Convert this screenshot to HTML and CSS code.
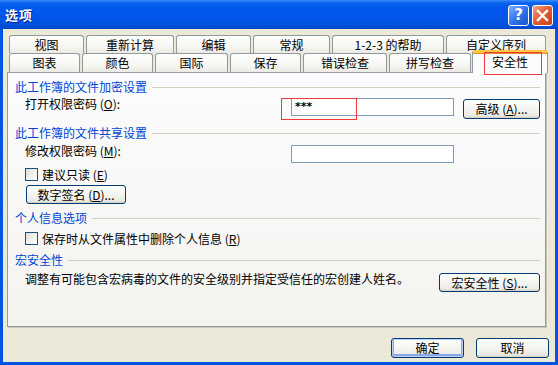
FILE: index.html
```html
<!DOCTYPE html>
<html lang="zh-CN">
<head>
    <meta charset="UTF-8">
    <title>选项</title>
    <link rel="stylesheet" href="styles.css">
</head>
<body>
    <div class="window">
        <!-- Title bar -->
        <div class="titlebar">
            <span class="title">选项</span>
            <div class="caption-buttons">
                <span class="cap help">?</span>
                <span class="cap close">
                    <svg width="13" height="13" viewBox="0 0 13 13">
                        <path d="M2 2 L11 11 M11 2 L2 11" stroke="#fff" stroke-width="2.4" stroke-linecap="square"/>
                    </svg>
                </span>
            </div>
        </div>

        <div class="client">
            <!-- Tabs -->
            <div class="tabs">
                <div class="tab-row row-back">
                    <div class="tab">视图</div>
                    <div class="tab">重新计算</div>
                    <div class="tab">编辑</div>
                    <div class="tab">常规</div>
                    <div class="tab">1-2-3 的帮助</div>
                    <div class="tab">自定义序列</div>
                </div>
                <div class="tab-row row-front">
                    <div class="tab">图表</div>
                    <div class="tab">颜色</div>
                    <div class="tab">国际</div>
                    <div class="tab">保存</div>
                    <div class="tab">错误检查</div>
                    <div class="tab">拼写检查</div>
                    <div class="tab active">安全性</div>
                </div>
            </div>

            <!-- Security page -->
            <div class="page">
                <div class="group-title">此工作簿的文件加密设置</div>
                <div class="field field-open">
                    <span class="label">打开权限密码 (<u>O</u>):</span>
                    <span class="textbox">***</span>
                    <span class="btn btn-adv">高级 (<u>A</u>)...</span>
                </div>

                <div class="group-title title-share">此工作簿的文件共享设置</div>
                <div class="field field-modify">
                    <span class="label">修改权限密码 (<u>M</u>):</span>
                    <span class="textbox"></span>
                </div>
                <div class="check check-readonly">
                    <span class="box"></span>
                    <span>建议只读 (<u>E</u>)</span>
                </div>
                <span class="btn btn-sign">数字签名 (<u>D</u>)...</span>

                <div class="group-title title-personal">个人信息选项</div>
                <div class="check check-remove">
                    <span class="box"></span>
                    <span>保存时从文件属性中删除个人信息 (<u>R</u>)</span>
                </div>

                <div class="group-title title-macro">宏安全性</div>
                <div class="macro-row">
                    <span class="macro-text">调整有可能包含宏病毒的文件的安全级别并指定受信任的宏创建人姓名。</span>
                    <span class="btn btn-macro">宏安全性 (<u>S</u>)...</span>
                </div>
            </div>

            <!-- Dialog buttons -->
            <div class="footer">
                <span class="btn btn-dialog default">确定</span>
                <span class="btn btn-dialog">取消</span>
            </div>
        </div>

        <!-- Red annotation boxes -->
        <div class="mark mark-tab"></div>
        <div class="mark mark-pass"></div>
    </div>
</body>
</html>
```

FILE: styles.css
```css
* {
    margin: 0;
    padding: 0;
    box-sizing: border-box;
}

body {
    width: 558px;
    height: 365px;
    overflow: hidden;
    font-family: "Noto Sans CJK SC", "DejaVu Sans", sans-serif;
    font-size: 12px;
    color: #000;
}

.window {
    position: relative;
    width: 558px;
    height: 365px;
    background: #0054e3;
    display: flex;
    flex-direction: column;
}

/* Title bar */
.titlebar {
    height: 29px;
    display: flex;
    align-items: center;
    justify-content: space-between;
    padding: 0 5px 0 5px;
    background: linear-gradient(#3a8cfd 0, #0a62ea 3px, #0058ee 8px, #0055e8 18px, #0050dc 26px, #0046c4 29px);
}

.title {
    color: #fff;
    font-weight: bold;
    font-size: 13px;
    text-shadow: 1px 1px 0 #0a1883;
    letter-spacing: 1px;
}

.caption-buttons {
    display: flex;
    gap: 3px;
    margin-top: 1px;
}

.cap {
    width: 21px;
    height: 21px;
    border: 1px solid #fff;
    border-radius: 3px;
    display: flex;
    align-items: center;
    justify-content: center;
    color: #fff;
}

.help {
    background: linear-gradient(135deg, #7fb0ff, #2e6fea 55%, #1c53d0);
    font-weight: bold;
    font-size: 15px;
    font-family: "DejaVu Sans", sans-serif;
}

.close {
    background: linear-gradient(135deg, #f4a585, #e25a2f 50%, #c8401c);
}

/* Client area */
.client {
    flex: 1;
    margin: 0 3px 3px 3px;
    background-color: #ece9d8;
    background-image: radial-gradient(circle, #e2dfcc 0.6px, transparent 1px);
    background-size: 5px 5px;
    display: flex;
    flex-direction: column;
    padding-top: 6px;
}

/* Tabs */
.tabs {
    margin-left: 6px;
    width: 538px;
}

.tab-row {
    display: grid;
    column-gap: 2px;
    align-items: end;
}

.row-back {
    grid-template-columns: 75px 88px 75px 77px 112px 100px;
    height: 18px;
}

.row-front {
    grid-template-columns: 71px 71px 73px 71px 84px 82px 74px;
    height: 19px;
}

.tab {
    height: 100%;
    border: 1px solid #919b9c;
    border-bottom: none;
    border-radius: 3px 3px 0 0;
    background: linear-gradient(#fefefe, #f6f6f3 60%, #ebeae4);
    display: flex;
    align-items: center;
    justify-content: center;
    white-space: nowrap;
    line-height: 14px;
}

.tab.active {
    position: relative;
    z-index: 2;
    height: 23px;
    margin: -3px -1px -1px -1px;
    border-top: 3px solid #ffc83c;
    box-shadow: inset 0 1px 0 #e68b2c;
    background: #fcfcfe;
    padding-bottom: 2px;
}

/* Page */
.page {
    margin-left: 4px;
    width: 539px;
    height: 255px;
    border: 1px solid #919b9c;
    box-shadow: 1px 1px 0 #c7c5b8;
    background: linear-gradient(#fcfcfe, #f4f3ee);
    padding: 7px 5px 0 7px;
    display: flex;
    flex-direction: column;
    align-items: flex-start;
}

.group-title {
    align-self: stretch;
    display: flex;
    align-items: center;
    gap: 5px;
    color: #0046d5;
    line-height: 14px;
    white-space: nowrap;
}

.group-title::after {
    content: "";
    flex: 1;
    height: 1px;
    background: #d0d0bf;
}

.title-share { margin-top: 7px; }
.title-personal { margin-top: 7px; }
.title-macro { margin-top: 8px; }

.field {
    align-self: stretch;
    display: flex;
    align-items: flex-start;
    padding-left: 10px;
    line-height: 14px;
}

.field-open { margin-top: 3px; }
.field-modify { margin-top: 4px; }

.label {
    width: 266px;
}

.textbox {
    margin-top: 1px;
    width: 163px;
    height: 18px;
    border: 1px solid #7f9db9;
    background: #fff;
    padding-left: 3px;
    display: flex;
    align-items: center;
    font-family: "DejaVu Sans", sans-serif;
    font-weight: bold;
    font-size: 11px;
}

.btn {
    display: flex;
    align-items: center;
    justify-content: center;
    border: 1px solid #003c74;
    border-radius: 3px;
    background: linear-gradient(#ffffff, #f5f5f1 45%, #ecebe6 85%, #d6d0c5);
    white-space: nowrap;
    line-height: 14px;
}

.btn-adv {
    margin-left: auto;
    margin-top: 2px;
    width: 77px;
    height: 20px;
}

.check {
    display: flex;
    align-items: center;
    gap: 4px;
    margin-left: 10px;
    line-height: 13px;
}

.check-readonly { margin-top: 5px; }
.check-remove { margin-top: 7px; }

.box {
    width: 13px;
    height: 13px;
    border: 1px solid #1c5180;
    background: linear-gradient(135deg, #dcdcd7, #f4f4f0 60%, #fff);
}

.btn-sign {
    margin-top: 4px;
    margin-left: 11px;
    width: 100px;
    height: 19px;
}

.macro-row {
    align-self: stretch;
    display: flex;
    align-items: flex-start;
    justify-content: space-between;
    margin-top: 5px;
    padding-left: 10px;
    line-height: 14px;
}

.btn-macro {
    margin-top: 1px;
    width: 101px;
    height: 19px;
}

/* Footer */
.footer {
    display: flex;
    justify-content: flex-end;
    gap: 12px;
    margin-top: 11px;
    padding-right: 6px;
}

.btn-dialog {
    width: 73px;
    height: 20px;
}

.btn-dialog.default {
    box-shadow: inset 0 0 0 1px #bcd0f4, inset 0 -1px 0 2px #8aa8ea;
}

/* Annotation boxes */
.mark {
    position: absolute;
    border: 1px solid #f03a3a;
    z-index: 5;
}

.mark-tab {
    left: 484px;
    top: 52px;
    width: 58px;
    height: 23px;
}

.mark-pass {
    left: 281px;
    top: 98px;
    width: 76px;
    height: 22px;
}
```
